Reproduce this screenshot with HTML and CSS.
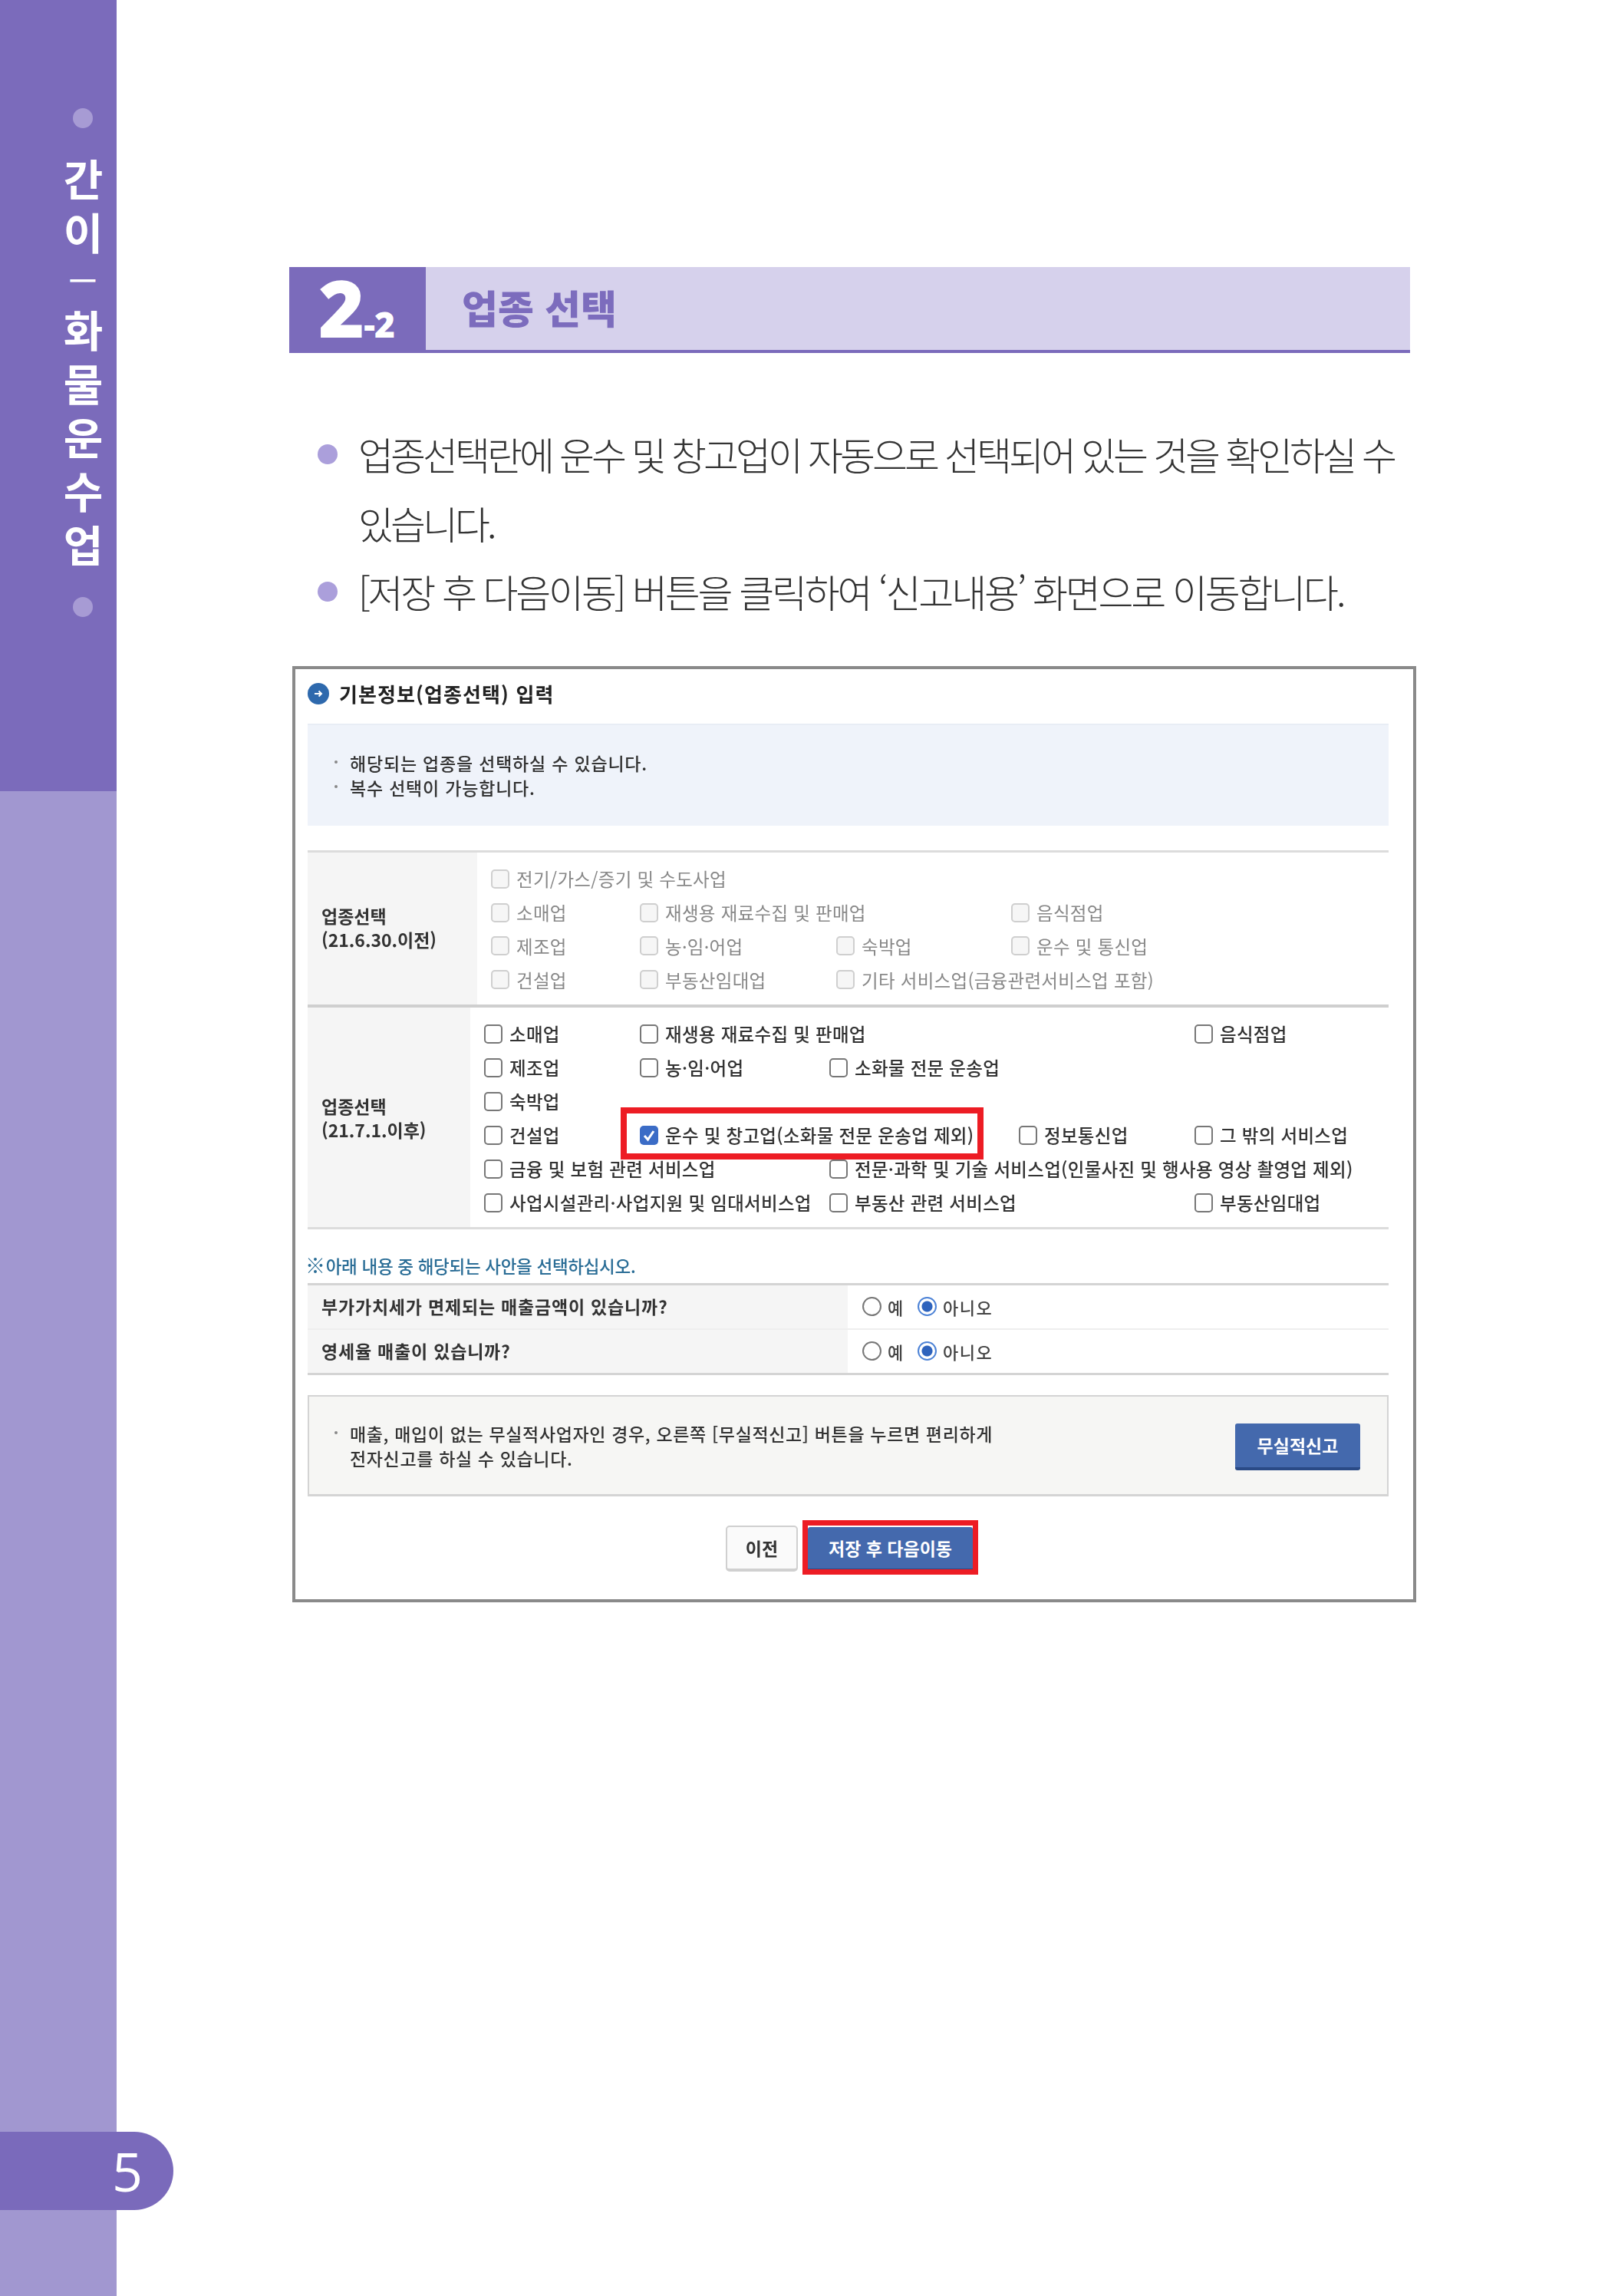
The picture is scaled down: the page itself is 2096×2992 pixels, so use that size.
FILE: index.html
```html
<!DOCTYPE html>
<html lang="ko">
<head>
<meta charset="utf-8">
<title>업종 선택</title>
<link rel="stylesheet" href="styles.css">
</head>
<body>
<div class="page">
  <aside class="side">
    <div class="side-top">
      <span class="side-dot"></span>
      <div class="side-title">간이<span class="side-dash">ㅡ</span>화물운수업</div>
      <span class="side-dot"></span>
    </div>
    <div class="side-bottom"></div>
    <div class="page-tab">5</div>
  </aside>
  <main class="main">
    <header class="head">
      <div class="head-num"><span class="num-big">2</span><span class="num-small">-2</span></div>
      <h1 class="head-title">업종 선택</h1>
    </header>
    <ul class="bullets">
      <li class="tight">업종선택란에 운수 및 창고업이 자동으로 선택되어 있는 것을 확인하실 수 있습니다.</li>
      <li>[저장 후 다음이동] 버튼을 클릭하여 ‘신고내용’ 화면으로 이동합니다.</li>
    </ul>
    <section class="panel">
      <h2 class="panel-title">
        <svg class="title-icon" viewBox="0 0 28 28"><circle cx="14" cy="14" r="14" fill="#2e69ad"/><path d="M9 14h9M14.500 10.500 18 14l-3.500 3.500" fill="none" stroke="#fff" stroke-width="2"/></svg>
        기본정보(업종선택) 입력
      </h2>
      <div class="info">
        <p>해당되는 업종을 선택하실 수 있습니다.</p>
        <p>복수 선택이 가능합니다.</p>
      </div>
      <div class="tbl tbl-old">
        <div class="tbl-th th-old">업종선택<br>(21.6.30.이전)</div>
        <div class="opts opts-old">
          <label class="opt off span-all"><i class="cb"></i>전기/가스/증기 및 수도사업</label>
          <label class="opt off"><i class="cb"></i>소매업</label>
          <label class="opt off span-2"><i class="cb"></i>재생용 재료수집 및 판매업</label>
          <label class="opt off"><i class="cb"></i>음식점업</label>
          <label class="opt off"><i class="cb"></i>제조업</label>
          <label class="opt off"><i class="cb"></i>농·임·어업</label>
          <label class="opt off"><i class="cb"></i>숙박업</label>
          <label class="opt off"><i class="cb"></i>운수 및 통신업</label>
          <label class="opt off"><i class="cb"></i>건설업</label>
          <label class="opt off"><i class="cb"></i>부동산임대업</label>
          <label class="opt off span-2"><i class="cb"></i>기타 서비스업(금융관련서비스업 포함)</label>
        </div>
      </div>
      <div class="tbl tbl-new">
        <div class="tbl-th th-new">업종선택<br>(21.7.1.이후)</div>
        <div class="opts opts-new">
          <label class="opt"><i class="cb"></i>소매업</label>
          <label class="opt c2-4"><i class="cb"></i>재생용 재료수집 및 판매업</label>
          <label class="opt"><i class="cb"></i>음식점업</label>
          <label class="opt"><i class="cb"></i>제조업</label>
          <label class="opt"><i class="cb"></i>농·임·어업</label>
          <label class="opt c3-5"><i class="cb"></i>소화물 전문 운송업</label>
          <label class="opt row-full"><i class="cb"></i>숙박업</label>
          <label class="opt"><i class="cb"></i>건설업</label>
          <label class="opt mark c2-3"><i class="cb on"><svg viewBox="0 0 24 25"><path d="M6 13l4.500 5L18 7" fill="none" stroke="#fff" stroke-width="3"/></svg></i>운수 및 창고업(소화물 전문 운송업 제외)</label>
          <label class="opt"><i class="cb"></i>정보통신업</label>
          <label class="opt"><i class="cb"></i>그 밖의 서비스업</label>
          <label class="opt c1-2"><i class="cb"></i>금융 및 보험 관련 서비스업</label>
          <label class="opt c3-end"><i class="cb"></i>전문·과학 및 기술 서비스업(인물사진 및 행사용 영상 촬영업 제외)</label>
          <label class="opt c1-2"><i class="cb"></i>사업시설관리·사업지원 및 임대서비스업</label>
          <label class="opt c3-4"><i class="cb"></i>부동산 관련 서비스업</label>
          <label class="opt"><i class="cb"></i>부동산임대업</label>
        </div>
      </div>
      <p class="note"><span class="note-mark">※</span> 아래 내용 중 해당되는 사안을 선택하십시오.</p>
      <div class="qa">
        <div class="qa-row">
          <div class="qa-q">부가가치세가 면제되는 매출금액이 있습니까?</div>
          <div class="qa-a"><i class="rd"></i><span class="rd-yes">예</span><i class="rd on"></i><span>아니오</span></div>
        </div>
        <div class="qa-row">
          <div class="qa-q">영세율 매출이 있습니까?</div>
          <div class="qa-a"><i class="rd"></i><span class="rd-yes">예</span><i class="rd on"></i><span>아니오</span></div>
        </div>
      </div>
      <div class="nil">
        <p class="nil-text">매출, 매입이 없는 무실적사업자인 경우, 오른쪽 [무실적신고] 버튼을 누르면 편리하게<br>전자신고를 하실 수 있습니다.</p>
        <button class="btn btn-blue btn-nil" type="button">무실적신고</button>
      </div>
      <div class="actions">
        <button class="btn btn-prev" type="button">이전</button>
        <button class="btn btn-blue btn-save" type="button">저장 후 다음이동</button>
      </div>
    </section>
  </main>
</div>
</body>
</html>
```
FILE: styles.css
```css
*, *::before, *::after { box-sizing: border-box; }
html, body { margin: 0; padding: 0; background: #fff; }
body { font-family: "Noto Sans CJK KR", "Noto Sans", sans-serif; color: #333; }
p, h1, h2, ul { margin: 0; padding: 0; }

.page { display: flex; width: 2096px; height: 2992px; overflow: hidden; }

/* sidebar */
.side { position: relative; flex: 0 0 152px; display: flex; flex-direction: column; }
.side-top { height: 1031px; background: #7b6bbb; display: flex; flex-direction: column; align-items: center; padding: 141px 0 0 64px; }
.side-dot { width: 26px; height: 26px; border-radius: 50%; background: #a79bd4; }
.side-title { writing-mode: vertical-rl; text-orientation: upright; margin: 39px 0 25px; color: #fff; font-size: 56px; font-weight: 600; line-height: 70px; letter-spacing: 14px; }
.side-dash { font-size: 40px; font-weight: 500; letter-spacing: 17px; }
.side-bottom { flex: 1; background: #a197d0; }
.page-tab { position: absolute; left: 0; top: 2778px; width: 226px; height: 102px; background: #7a6abb; border-radius: 0 51px 51px 0; color: #fff; font-family: "Open Sans", sans-serif; font-weight: 400; font-size: 70px; line-height: 102px; padding-left: 146px; }

/* main */
.main { margin-left: 225px; width: 1461px; padding-top: 348px; }
.head { display: flex; height: 112px; background: #d6d1ec; border-bottom: 4px solid #7b6bbb; }
.head-num { flex: 0 0 178px; height: 112px; background: #7b6bbb; color: #fff; font-family: "Noto Sans", sans-serif; font-weight: 900; display: flex; align-items: baseline; padding-left: 38px; line-height: 104px; }
.num-big { font-size: 103px; }
.num-small { font-size: 46px; margin-left: -1px; letter-spacing: -1px; }
.head-title { font-size: 51px; font-weight: 900; color: #7c6cbd; line-height: 104px; padding-left: 47px; }

.bullets { list-style: none; margin-top: 87px; padding-left: 90px; }
.bullets li { position: relative; font-size: 50px; font-weight: 300; line-height: 89.500px; letter-spacing: -3.200px; color: #333; width: 1375px; }
.bullets li.tight { letter-spacing: -4px; }
.bullets li::before { content: ""; position: absolute; left: -53px; top: 32px; width: 26px; height: 26px; border-radius: 50%; background: #ab9fdb; }

/* panel */
.panel { margin: 52px 0 0 4px; width: 1465px; height: 1220px; border: 4px solid #8a8a8a; padding: 0 32px 0 16px; filter: blur(0.5px); }
.panel-title { display: flex; align-items: center; gap: 13px; height: 64px; font-size: 26px; font-weight: 700; color: #222; letter-spacing: 1.100px; }
.title-icon { width: 28px; height: 28px; }
.info { margin-top: 7px; height: 133px; background: #eff3fa; border-top: 2px solid #e8edf5; padding: 33px 0 0 55px; font-size: 23px; line-height: 32px; color: #333; letter-spacing: 0.800px; font-weight: 500; }
.info p, .nil-text { position: relative; }
.info p::before, .nil-text::before { content: ""; position: absolute; left: -20px; top: 13px; width: 4px; height: 4px; border-radius: 50%; background: #888; }

.tbl { display: flex; }
.tbl-old { margin-top: 32px; height: 205px; border-top: 3px solid #dcdcdc; border-bottom: 4px solid #cfcfcf; }
.tbl-new { height: 289px; border-bottom: 3px solid #dcdcdc; }
.tbl-th { background: #f5f5f5; padding-left: 18px; font-size: 23px; font-weight: 700; line-height: 31px; color: #333; padding-top: 67px; }
.th-old { flex: 0 0 221px; }
.th-new { flex: 0 0 212px; padding-top: 113px; }

.opts { flex: 1; display: grid; align-content: center; padding-top: 3px; }
.opts-old { padding-left: 18px; grid-template-columns: 194px 256px 228px 1fr; grid-auto-rows: 43.700px; }
.opts-new { padding-left: 18px; grid-template-columns: 203px 247px 247px 229px 1fr; grid-auto-rows: 44px; }
.opt { display: flex; align-items: center; gap: 9px; font-size: 23.500px; font-weight: 500; letter-spacing: 0.300px; white-space: nowrap; color: #333; }
.opt.off { color: #888; font-weight: 400; }
.span-all { grid-column: 1 / -1; }
.span-2 { grid-column: span 2; }
.c2-4 { grid-column: 2 / 5; }
.c3-5 { grid-column: 3 / 6; }
.row-full { grid-column: 1 / -1; }
.c2-3 { grid-column: 2 / 4; }
.c1-2 { grid-column: 1 / 3; }
.c3-end { grid-column: 3 / -1; }
.c3-4 { grid-column: 3 / 5; }
.cb { flex: 0 0 24px; width: 24px; height: 25px; border: 2.500px solid #777; border-radius: 5px; background: #fff; display: block; }
.off .cb { border-color: #cfcfcf; background: #f6f6f6; }
.cb.on { border: 0; background: #3b6cc6; }
.cb.on svg { display: block; width: 24px; height: 25px; }
.mark { position: relative; }
.mark::after { content: ""; position: absolute; left: -25px; top: -14px; width: 473px; height: 68px; border: 8px solid #ed1c24; }

.note { margin: 30px 0 0 -3px; font-size: 22.500px; line-height: 34px; color: #2a6d96; letter-spacing: -0.300px; font-weight: 500; }
.note-mark { font-size: 26px; font-weight: 300; line-height: 20px; margin-right: -5px; }
.qa { margin-top: 6px; border-top: 3px solid #d4d4d4; border-bottom: 3px solid #d4d4d4; }
.qa-row { display: flex; height: 56px; }
.qa-row + .qa-row { border-top: 2px solid #eeeeee; height: 58px; }
.qa-q { flex: 0 0 704px; background: #f5f5f5; padding-left: 18px; font-size: 23px; font-weight: 700; line-height: 54px; color: #333; letter-spacing: 0.800px; }
.qa-a { display: flex; align-items: center; padding-left: 19px; font-size: 22px; color: #444; letter-spacing: 1.500px; font-weight: 500; }
.rd { width: 25px; height: 25px; border: 2px solid #777; border-radius: 50%; background: #fff; display: block; flex: none; margin-right: 8px; }
.rd.on { border: 2px solid #4c82d6; background: radial-gradient(circle, #2e63bd 0 6.500px, #fff 7.500px); }
.rd-yes { width: 39px; }

.nil { margin-top: 26px; height: 132px; background: #f6f6f4; border: 2px solid #d4d4d4; border-bottom-width: 3px; display: flex; padding: 32px 35px 0 53px; justify-content: space-between; }
.nil-text { font-size: 23px; line-height: 32px; color: #333; letter-spacing: 0.650px; font-weight: 500; }
.btn { font-family: inherit; font-size: 23px; font-weight: 700; border: 0; padding: 0; display: block; }
.btn-blue { background: #4469ad; color: #fff; border-bottom: 4px solid #2a4a86; border-radius: 3px; }
.btn-nil { width: 163px; height: 61px; margin-top: 3px; }
.actions { display: flex; justify-content: center; gap: 13px; margin-top: 38px; padding-left: 3px; align-items: flex-start; }
.btn-prev { width: 94px; height: 60px; background: #fafafa; border: 2px solid #d0d0d0; border-bottom-width: 4px; border-radius: 5px; color: #333; }
.btn-save { position: relative; width: 215px; height: 58px; margin-top: 2px; }
.btn-save::after { content: ""; position: absolute; left: -7px; right: -7px; top: -9px; bottom: -8px; border: 7px solid #ed1c24; }
```
